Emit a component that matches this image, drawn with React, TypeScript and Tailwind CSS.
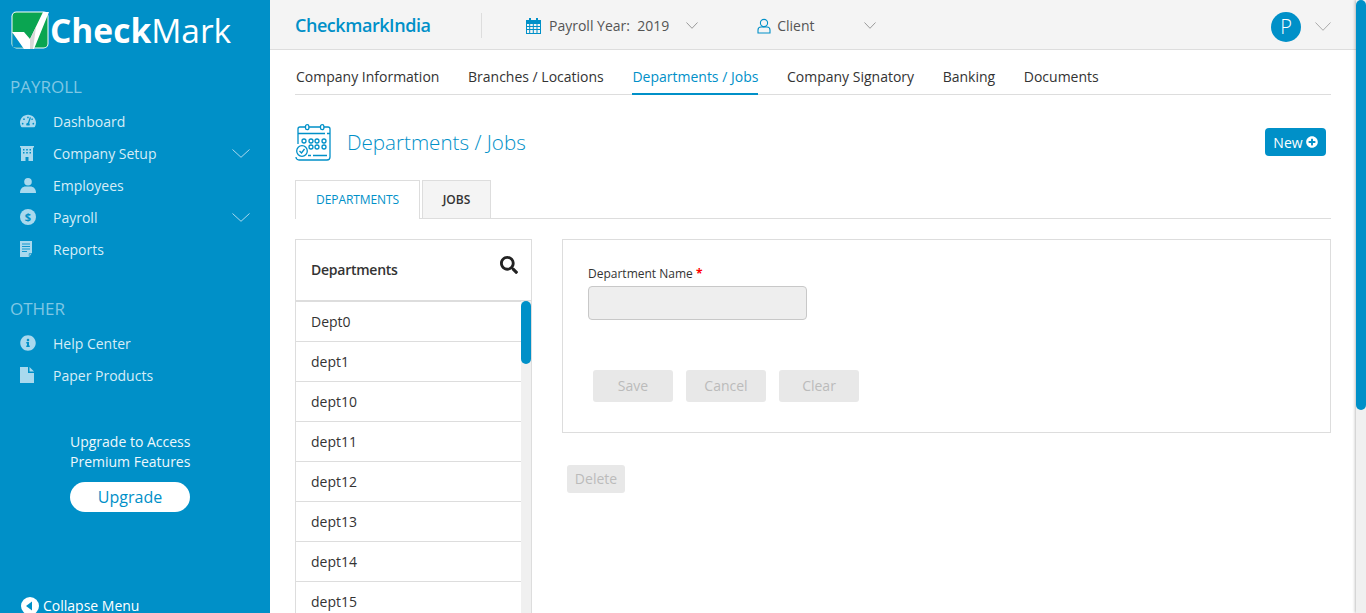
import { FaInfoCircle, FaPlusCircle, FaSearch, FaTachometerAlt } from "react-icons/fa";

const departments = ["Dept0", "dept1", "dept10", "dept11", "dept12", "dept13", "dept14", "dept15"];
const topTabs = ["Company Information", "Branches / Locations", "Departments / Jobs", "Company Signatory", "Banking", "Documents"];

const Logo = () => (
  <svg width="38" height="38" viewBox="0 0 38 38" className="shrink-0">
    <rect x="0.5" y="0.5" width="37" height="37" rx="5" fill="#ffffff" />
    <rect x="1.5" y="1.5" width="35" height="35" rx="4" fill="#0aa551" />
    <path d="M1.5 22 L13 36.5 L1.5 36.5 Z" fill="#0090c8" />
    <path d="M1 21 L13 21 L19 28 L32 1 L38 1 L23 38 L13 38 Z" fill="#ffffff" />
    <path d="M19 28 L25 16 L22 38 L19 38 Z" fill="#d8d8d8" />
  </svg>
);

// thin chevron used all over the header and sidebar
const Chevron = ({ w, h, color, className }: { w: number; h: number; color: string; className?: string }) => (
  <svg width={w} height={h} viewBox={`0 0 ${w} ${h}`} fill="none" stroke={color} strokeWidth="1" className={className}>
    <path d={`M0.5 0.5 L${w / 2} ${h - 0.7} L${w - 0.5} 0.5`} />
  </svg>
);

const BuildingIcon = () => (
  <svg width="14" height="15" viewBox="0 0 14 15" fill="#a9d9ee">
    <path
      fillRule="evenodd"
      d="M0 0 H14 V1.5 H13 V15 H8.5 V11 H5.5 V15 H1 V1.5 H0 Z M3 3 V4.5 H4.5 V3 Z M6.2 3 V4.5 H7.8 V3 Z M9.5 3 V4.5 H11 V3 Z M3 6 V7.5 H4.5 V6 Z M6.2 6 V7.5 H7.8 V6 Z M9.5 6 V7.5 H11 V6 Z"
    />
  </svg>
);

const UserIcon = () => (
  <svg width="16" height="15" viewBox="0 0 16 15" fill="#a9d9ee">
    <circle cx="8" cy="3.8" r="3.8" />
    <path d="M0 15 C0 10.5 3 8.5 5.5 8.5 H10.5 C13 8.5 16 10.5 16 15 Z" />
  </svg>
);

const DollarIcon = () => (
  <svg width="16" height="16" viewBox="0 0 16 16">
    <circle cx="8" cy="8" r="8" fill="#a9d9ee" />
    <text x="8" y="12" textAnchor="middle" fontSize="11" fontWeight="700" fill="#0090c8" fontFamily="Open Sans">
      $
    </text>
  </svg>
);

const ReportIcon = () => (
  <svg width="13" height="16" viewBox="0 0 13 16">
    <path d="M0 0 H12 V12 L9 16 H0 Z" fill="#a9d9ee" />
    <path d="M2 3 H10 M2 5.5 H10 M2 8 H10 M2 10.5 H7" stroke="#0090c8" strokeWidth="0.9" />
    <path d="M9.2 15.5 V12.6 H12" fill="none" stroke="#0090c8" strokeWidth="0.7" />
  </svg>
);

const PaperIcon = () => (
  <svg width="14" height="16" viewBox="0 0 14 16">
    <path d="M0 0 H8 V6 H14 V16 H0 Z" fill="#a9d9ee" />
    <path d="M9.5 0 L14 4.5 H9.5 Z" fill="#a9d9ee" />
  </svg>
);

const SmallCalendarIcon = () => (
  <svg width="15" height="16" viewBox="0 0 15 16" className="ml-[44px]">
    <path
      fillRule="evenodd"
      d="M0 2 H3 V0 H5 V2 H10 V0 H12 V2 H15 V16 H0 Z M1 6 V8 H3.2 V6 Z M4.2 6 V8 H6.8 V6 Z M7.8 6 V8 H10.5 V6 Z M11.5 6 V8 H14 V6 Z M1 9 V11 H3.2 V9 Z M4.2 9 V11 H6.8 V9 Z M7.8 9 V11 H10.5 V9 Z M11.5 9 V11 H14 V9 Z M1 12 V15 H3.2 V12 Z M4.2 12 V15 H6.8 V12 Z M7.8 12 V15 H10.5 V12 Z M11.5 12 V15 H14 V12 Z"
      fill="#0090c8"
    />
  </svg>
);

const CalendarCheckIcon = () => (
  <svg width="37" height="37" viewBox="0 0 37 37" fill="none" stroke="#0090c8" strokeWidth="1.3" className="mt-px shrink-0">
    <path d="M3 20 V5 a2 2 0 0 1 2-2 H33 a2 2 0 0 1 2 2 V33 a3 3 0 0 1-3 3 H4 a3 3 0 0 1-3-3" />
    <path d="M3 9.5 H30 M32 9.5 H35" />
    <rect x="10.5" y="0.7" width="3.4" height="5" rx="1.7" fill="#fff" />
    <rect x="25.5" y="0.7" width="3.4" height="5" rx="1.7" fill="#fff" />
    {[9, 16, 22, 29].map((x) => (
      <circle key={x} cx={x} cy="17" r="2" />
    ))}
    {[16, 22, 29].map((x) => (
      <circle key={x} cx={x} cy="23" r="2" />
    ))}
    <circle cx="7" cy="27" r="5.3" fill="#fff" />
    <path d="M4.5 27 l2 2 l3-4" />
    <path d="M13 31.5 H32" strokeDasharray="3 2 14" />
  </svg>
);

const NavItem = ({ icon, label, arrow }: { icon: React.ReactNode; label: string; arrow?: boolean }) => (
  <div className="flex h-8 items-center pl-5 pr-5 text-[14px] text-[#d6edf7]">
    <div className="flex w-[33px] shrink-0 text-[#a9d9ee]">{icon}</div>
    <span className="flex-1">{label}</span>
    {arrow && <Chevron w={18} h={9} color="#a9d9ee" />}
  </div>
);

const App = () => {
  return (
    <div className="flex h-screen overflow-hidden bg-white font-['Open_Sans',sans-serif] text-[#333]">
      {/* Sidebar */}
      <aside className="flex h-full w-[270px] shrink-0 flex-col bg-[#0090c8]">
        <div className="flex items-center pl-[11px] pt-[11px]">
          <Logo />
          <span className="ml-[1px] text-[33.5px] leading-[38px] text-white">
            <b className="font-bold">Check</b>
            <span className="font-normal">Mark</span>
          </span>
        </div>
        <div className="mt-[26px] pl-[10px] text-[17px] leading-[24px] text-[#7fc7e4]">PAYROLL</div>
        <div className="mt-[6px]">
          <NavItem icon={<FaTachometerAlt size={16} />} label="Dashboard" />
          <NavItem icon={<BuildingIcon />} label="Company Setup" arrow />
          <NavItem icon={<UserIcon />} label="Employees" />
          <NavItem icon={<DollarIcon />} label="Payroll" arrow />
          <NavItem icon={<ReportIcon />} label="Reports" />
        </div>
        <div className="mt-[32px] pl-[10px] text-[17px] leading-[24px] text-[#7fc7e4]">OTHER</div>
        <div className="mt-[6px]">
          <NavItem icon={<FaInfoCircle size={16} />} label="Help Center" />
          <NavItem icon={<PaperIcon />} label="Paper Products" />
        </div>
        <div className="mt-[41px] pl-[70px] text-[14px] leading-[20px] text-[#eef8fc]">
          <div>Upgrade to Access</div>
          <div>Premium Features</div>
          <div className="mt-[10px] flex h-[30px] w-[120px] items-center justify-center rounded-full bg-white text-[16px] text-[#0090c8]">
            Upgrade
          </div>
        </div>
        <div className="mt-[84px] flex items-center pl-[21px] text-[14px] leading-[20px] text-white">
          <svg width="18" height="18" viewBox="0 0 18 18" className="mr-1 shrink-0">
            <circle cx="9" cy="9" r="9" fill="#fff" />
            <path d="M5 9 L11 4.5 V13.5 Z" fill="#0090c8" />
          </svg>
          Collapse Menu
        </div>
      </aside>

      {/* Main */}
      <div className="flex h-full min-w-0 flex-1 flex-col">
        <header className="flex h-[50px] shrink-0 items-center border-b border-[#dddddd] bg-[#f4f4f4] pl-[25px] pr-[25px] pt-[2px]">
          <div className="w-[186px] text-[18px] font-semibold tracking-[-0.45px] text-[#0090c8]">CheckmarkIndia</div>
          <div className="h-[25px] w-px bg-[#dddddd]" />
          <SmallCalendarIcon />
          <span className="ml-[8px] text-[14px] text-[#555]">Payroll Year:&nbsp; 2019</span>
          <Chevron w={12} h={7} color="#999999" className="ml-[17px]" />
          <svg width="14" height="16" viewBox="0 0 14 16" fill="none" stroke="#0090c8" strokeWidth="1.1" className="ml-[59px]">
            <circle cx="7" cy="5" r="3.6" />
            <path d="M1 15 V12 a3 3 0 0 1 3-3 H10 a3 3 0 0 1 3 3 V15 Z" />
          </svg>
          <span className="ml-[6px] w-[87px] text-[14px] text-[#555]">Client</span>
          <Chevron w={12} h={7} color="#999999" />
          <div className="ml-auto mt-[3px] flex h-[30px] w-[30px] items-center justify-center rounded-full bg-[#0090c8] text-[20px] font-light text-white">
            P
          </div>
          <Chevron w={16} h={9} color="#aaaaaa" className="ml-[14px] mt-[2px]" />
        </header>

        <main className="min-h-0 flex-1 overflow-hidden pl-[25px] pr-[25px]">
          <nav className="mt-[10px] flex h-[35px] gap-[28.6px] border-b border-[#dddddd] pl-px text-[14px] font-medium">
            {topTabs.map((tab) => (
              <div
                key={tab}
                className={
                  tab === "Departments / Jobs"
                    ? "h-[35px] border-b-2 border-[#0090c8] pt-[7px] leading-[20px] text-[#0090c8]"
                    : "pt-[7px] leading-[20px]"
                }
              >
                {tab}
              </div>
            ))}
          </nav>

          <div className="mt-[29px] flex h-[36px] items-center pr-[5px]">
            <CalendarCheckIcon />
            <h1 className="ml-[15px] text-[20.6px] font-light text-[#0090c8]">Departments / Jobs</h1>
            <button className="ml-auto flex h-[28px] w-[61px] items-center justify-center gap-[3px] rounded bg-[#0090c8] text-[14px] text-white">
              New <FaPlusCircle size={12} />
            </button>
          </div>

          <div className="mt-[20px] flex h-[39px] gap-[2px] border-b border-[#dddddd] text-[12px] font-semibold">
            <div className="flex h-[39px] w-[125px] items-center justify-center border border-b-0 border-[#dddddd] bg-white font-medium tracking-[-0.1px] text-[#0090c8]">
              DEPARTMENTS
            </div>
            <div className="flex h-[38px] w-[69px] items-center justify-center border border-b-0 border-[#dddddd] bg-[#f4f4f4]">
              JOBS
            </div>
          </div>

          <div className="mt-[20px] flex items-start gap-[30px]">
            {/* Department list */}
            <section className="h-[400px] w-[237px] shrink-0 overflow-hidden border border-[#dddddd]">
              <div className="flex h-[62px] items-center justify-between border-b-2 border-[#dddddd] pb-[2px] pl-[15px] pr-[13px]">
                <span className="text-[14px] font-semibold tracking-[-0.25px]">Departments</span>
                <FaSearch size={18} className="mb-[8px] text-[#222]" />
              </div>
              <div className="flex">
                <ul className="flex-1">
                  {departments.map((dept) => (
                    <li key={dept} className="flex h-[40px] items-center border-b border-[#dddddd] pl-[15px] text-[14px]">
                      {dept}
                    </li>
                  ))}
                </ul>
                <div className="-mt-px h-[400px] w-[10px] shrink-0 bg-[#f0f0f0]">
                  <div className="h-[63px] rounded-full bg-[#0090c8]" />
                </div>
              </div>
            </section>

            {/* Form */}
            <div className="min-w-0 flex-1">
              <section className="h-[194px] border border-[#dddddd] pl-[25px] pt-[25px]">
                <label className="block text-[12px] leading-[18px]">
                  Department Name <span className="font-bold text-[#ff0000]">*</span>
                </label>
                <input
                  disabled
                  className="mt-[3px] block h-[34px] w-[219px] rounded border border-[#c8c8c8] bg-[#eeeeee]"
                />
                <div className="ml-[5px] mt-[50px] flex gap-[13px]">
                  {["Save", "Cancel", "Clear"].map((label) => (
                    <button key={label} disabled className="h-[32px] w-[80px] rounded-[3px] bg-[#e8e8e8] pb-px text-[14px] text-[#bbbbbb]">
                      {label}
                    </button>
                  ))}
                </div>
              </section>
              <button disabled className="ml-[5px] mt-[32px] h-[28px] w-[58px] rounded-[3px] bg-[#e8e8e8] pb-[2px] text-[14px] text-[#bbbbbb]">
                Delete
              </button>
            </div>
          </div>
        </main>
      </div>

      {/* Page scrollbar */}
      <div className="h-full w-[10px] shrink-0 bg-[#f0f0f0] shadow-[-1px_0_3px_rgba(0,0,0,0.25)]">
        <div className="h-[410px] rounded-full bg-[#0090c8]" />
      </div>
    </div>
  );
};

export default App;
